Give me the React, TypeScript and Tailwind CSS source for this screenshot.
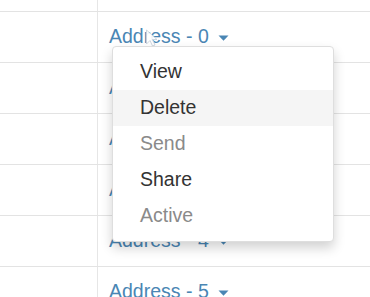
import React from "react";

const rows = [0, 1, 2, 3, 4, 5];

function Caret() {
  return (
    <svg width="11" height="6" viewBox="0 0 11 6" className="ml-[9px] mt-[2px]">
      <path d="M0.5 0.5 L10.5 0.5 L5.5 5.8 Z" fill="#4a86b4" />
    </svg>
  );
}

export default function App() {
  const items = [
    { label: "View", disabled: false, active: false },
    { label: "Delete", disabled: false, active: true },
    { label: "Send", disabled: true, active: false },
    { label: "Share", disabled: false, active: false },
    { label: "Active", disabled: true, active: false },
  ];
  return (
    <div
      className="relative w-[370px] h-[297px] overflow-hidden bg-white"
      style={{ fontFamily: '"Liberation Sans", Arial, sans-serif' }}
    >
      <div className="flex h-[11px]">
        <div className="w-[97px]" />
        <div className="flex-1 border-l border-[#e6e6e6]" />
      </div>
      {rows.map((r) => (
        <div key={r} className="flex h-[51px] border-t border-[#e3e3e3]">
          <div className="w-[97px]" />
          <div className="flex-1 border-l border-[#e6e6e6] flex items-center pl-[11px]">
            <span className="text-[19.5px] leading-none text-[#4a86b4]">
              Address - {r}
            </span>
            <Caret />
          </div>
        </div>
      ))}

      {/* cursor */}
      <svg
        className="absolute left-[145px] top-[29px]"
        width="14"
        height="19"
        viewBox="0 0 14 19"
      >
        <path
          d="M1.5 1 L1.5 15 L5 11.5 L7.5 17 L10 16 L7.5 10.5 L12 10.5 Z"
          fill="#ffffff"
          fillOpacity="0.92"
          stroke="#c9d3db"
          strokeWidth="0.9"
          strokeLinejoin="round"
        />
      </svg>

      {/* dropdown menu */}
      <div className="absolute left-[112px] top-[46px] w-[222px] rounded-[4px] border border-[#dedede] bg-white py-[7px] shadow-[0_6px_12px_rgba(0,0,0,0.18)]">
        {items.map((it) => (
          <div
            key={it.label}
            className={
              "h-[36px] flex items-center pl-[27px] text-[19.5px] leading-none " +
              (it.active ? "bg-[#f5f5f5] " : "") +
              (it.disabled ? "text-[#8a8a8a]" : "text-[#333333]")
            }
          >
            {it.label}
          </div>
        ))}
      </div>
    </div>
  );
}
